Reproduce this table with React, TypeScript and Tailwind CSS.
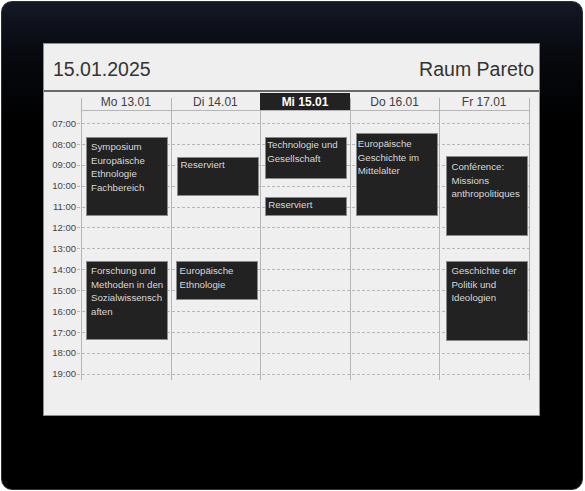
import React from 'react'

type CalEvent = {
  lines: string[]
  left: number
  top: number
  width: number
  height: number
  pt: number
  pl: number
}

const days = [
  { label: 'Mo 13.01', today: false },
  { label: 'Di 14.01', today: false },
  { label: 'Mi 15.01', today: true },
  { label: 'Do 16.01', today: false },
  { label: 'Fr 17.01', today: false },
]

const hours = ['07:00', '08:00', '09:00', '10:00', '11:00', '12:00', '13:00', '14:00', '15:00', '16:00', '17:00', '18:00', '19:00']

// positions in px, relative to column left / grid body top
const events: CalEvent[][] = [
  [
    { lines: ['Symposium', 'Europäische', 'Ethnologie', 'Fachbereich'], left: 4, top: 26, width: 82, height: 79, pt: 2, pl: 4 },
    { lines: ['Forschung und', 'Methoden in den', 'Sozialwissensch', 'aften'], left: 4, top: 150, width: 82, height: 79, pt: 2, pl: 4 },
  ],
  [
    { lines: ['Reserviert'], left: 5, top: 46, width: 82, height: 39, pt: 0, pl: 3 },
    { lines: ['Europäische', 'Ethnologie'], left: 4, top: 150, width: 82, height: 39, pt: 2, pl: 3 },
  ],
  [
    { lines: ['Technologie und', 'Gesellschaft'], left: 4, top: 26, width: 82, height: 42, pt: 0, pl: 1 },
    { lines: ['Reserviert'], left: 4, top: 86, width: 82, height: 19, pt: 0, pl: 2 },
  ],
  [
    { lines: ['Europäische', 'Geschichte im', 'Mittelalter'], left: 5, top: 22, width: 82, height: 83, pt: 3, pl: 1 },
  ],
  [
    { lines: ['Conférence:', 'Missions', 'anthropolitiques'], left: 6, top: 45, width: 82, height: 80, pt: 3, pl: 4 },
    { lines: ['Geschichte der', 'Politik und', 'Ideologien'], left: 6, top: 150, width: 82, height: 80, pt: 2, pl: 4 },
  ],
]

function EventBox({ ev }: { ev: CalEvent }) {
  return (
    <div
      className="absolute bg-[#222222] border border-[#8a8a8a] text-[#d8d8d8] text-[9.7px] leading-[13.6px] whitespace-nowrap overflow-hidden"
      style={{ left: ev.left, top: ev.top, width: ev.width, height: ev.height, paddingTop: ev.pt, paddingLeft: ev.pl }}
    >
      {ev.lines.map((l) => (
        <div key={l}>{l}</div>
      ))}
    </div>
  )
}

export default function App() {
  return (
    <div className="w-[585px] h-[491px] bg-white pl-[1px] pt-[1px] font-['Liberation_Sans',Arial,sans-serif]">
      <div className="w-[582px] h-[489px] rounded-[11px] border border-[#2e2e2e] bg-[linear-gradient(180deg,#151925_0%,#080a10_10%,#000000_25%,#000000_100%)] pl-[41px] pt-[41px]">
        <div className="w-[497px] h-[373px] bg-[#efefef] border border-[#8c8c8c]">
          {/* header */}
          <div className="h-[46px] pt-[16px] pl-[9px] pr-[5px] flex justify-between text-[19.5px] leading-[19px] text-[#333333]">
            <span>15.01.2025</span>
            <span>Raum Pareto</span>
          </div>
          <div className="h-[2px] bg-[#6a6a6a]" />

          {/* day headers */}
          <div className="mt-[1px] h-[17px] flex pl-[37px] pr-[9px]">
            {days.map((d) => (
              <div
                key={d.label}
                className={
                  d.today
                    ? 'flex-1 flex items-center justify-center bg-[#222222] text-white font-bold text-[12px]'
                    : 'flex-1 flex items-center justify-center text-[#404040] text-[12px] bg-[linear-gradient(#b5b5b5,#b5b5b5)] bg-no-repeat bg-[length:1px_12px] bg-left-bottom'
                }
              >
                {d.label}
              </div>
            ))}
            <div className="w-px h-[12px] self-end bg-[#b5b5b5]" />
          </div>
          <div className="ml-[37px] mr-[9px] h-px bg-[#b5b5b5]" />

          {/* grid body */}
          <div className="relative">
            <div className="pt-[2px]">
              {hours.map((h) => (
                <div key={h} className="h-[20.9px] flex items-center">
                  <span className="w-[32px] text-right text-[9.5px] leading-none text-[#444444]">{h}</span>
                  <div className="ml-[1px] w-[454px] h-px bg-[repeating-linear-gradient(90deg,#b8b8b8_0px,#b8b8b8_3px,transparent_3px,transparent_5px)]" />
                </div>
              ))}
            </div>
            <div className="absolute left-[37px] top-0 w-[449px] h-[269px] grid grid-cols-5 border-r border-[#b5b5b5]">
              {events.map((col, i) => (
                <div key={i} className="relative border-l border-[#b5b5b5]">
                  {col.map((ev) => (
                    <EventBox key={ev.lines[0] + ev.top} ev={ev} />
                  ))}
                </div>
              ))}
            </div>
          </div>
        </div>
      </div>
    </div>
  )
}
